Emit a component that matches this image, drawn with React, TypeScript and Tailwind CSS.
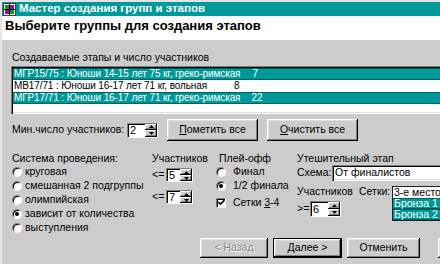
import React from "react";

const RAISED =
  "shadow-[inset_-1px_-1px_0_#000,inset_1px_1px_0_#fff,inset_-2px_-2px_0_#808080,inset_2px_2px_0_#dfdfdf]";
const RAISED_SMALL = "shadow-[inset_-1px_-1px_0_#000,inset_1px_1px_0_#fff,inset_-2px_-2px_0_#808080]";
const SUNKEN =
  "shadow-[inset_1px_1px_0_#808080,inset_2px_2px_0_#000,inset_-1px_-1px_0_#fff,inset_-2px_-2px_0_#dfdfdf]";

function AppIcon() {
  return (
    <svg width="13" height="13" viewBox="0 0 13 13" className="ml-[1px] shrink-0">
      <rect x="0.5" y="0.5" width="12" height="12" fill="#fff" stroke="#404040" />
      <rect x="2" y="2" width="4" height="4" fill="#00a000" />
      <rect x="7" y="2" width="4" height="4" fill="#a000a0" />
      <rect x="2" y="7" width="4" height="4" fill="#a000a0" />
      <rect x="7" y="7" width="4" height="4" fill="#00a000" />
      <path d="M6.5 1 V12 M1 6.5 H12" stroke="#000" strokeWidth="1" />
    </svg>
  );
}

function Arrow({ up }: { up?: boolean }) {
  return (
    <svg width="5" height="3" viewBox="0 0 5 3">
      {up ? <polygon points="2.5,0 5,3 0,3" fill="#000" /> : <polygon points="0,0 5,0 2.5,3" fill="#000" />}
    </svg>
  );
}

function Spin({ value, className }: { value: string; className: string }) {
  return (
    <div className={`flex shrink-0 border border-t-[#808080] border-l-[#808080] border-r-white border-b-white ${className}`}>
      <div className="flex-1 bg-white border-t border-l border-t-black border-l-black flex items-center pl-[1px] text-[11px] leading-none">
        {value}
      </div>
      <div className="w-[12px] flex flex-col">
        <div className={`flex-1 bg-[#cccccc] flex items-center justify-center ${RAISED_SMALL}`}>
          <Arrow up />
        </div>
        <div className={`flex-1 bg-[#cccccc] flex items-center justify-center ${RAISED_SMALL}`}>
          <Arrow />
        </div>
      </div>
    </div>
  );
}

function Radio({ checked }: { checked?: boolean }) {
  return (
    <span className="w-[10px] h-[10px] rounded-full bg-white border border-t-[#808080] border-l-[#808080] border-b-white border-r-white shadow-[inset_1px_1px_0_#000] shrink-0 flex items-center justify-center">
      {checked && <span className="w-[4px] h-[4px] rounded-full bg-black" />}
    </span>
  );
}

function Check() {
  return (
    <span className="w-[10px] h-[10px] bg-white border border-t-[#808080] border-l-[#808080] border-b-white border-r-white shadow-[inset_1px_1px_0_#000] shrink-0 flex items-center justify-center">
      <svg width="7" height="7" viewBox="0 0 7 7">
        <path d="M0.5 3 L2.5 5 L6.5 1" stroke="#000" strokeWidth="1.6" fill="none" />
      </svg>
    </span>
  );
}

function Btn({ children, className }: { children?: React.ReactNode; className: string }) {
  return (
    <div className={`bg-[#cccccc] flex items-center justify-center shrink-0 text-[10.5px] ${RAISED} ${className}`}>
      {children}
    </div>
  );
}

const rows = [
  { t: "МГР15/75 : Юноши 14-15 лет 75 кг, греко-римская", n: "7", sel: true, nc: "ml-[12px]" },
  { t: "МВ17/71 : Юноши 16-17 лет 71 кг, вольная", n: "8", sel: false, nc: "ml-[27px]" },
  { t: "МГР17/71 : Юноши 16-17 лет 71 кг, греко-римская", n: "22", sel: true, nc: "ml-[11px]" },
];

const systems = ["круговая", "смешанная 2 подгруппы", "олимпийская", "зависит от количества", "выступления"];

export default function App() {
  return (
    <div className="w-[440px] h-[264px] overflow-hidden bg-[#cccccc] font-['Liberation_Sans',Arial,sans-serif] text-[10.5px] text-black border-t-2 border-l-2 border-t-[#e4e4e4] border-l-[#e4e4e4] flex flex-col">
      <div className="h-[14px] bg-[#009999] flex items-center shrink-0">
        <AppIcon />
        <span className="ml-[3px] text-white font-bold text-[11.5px] leading-none">Мастер создания групп и этапов</span>
      </div>
      <div className="h-[24px] bg-white pl-[3px] pt-[2px] shrink-0">
        <span className="font-bold text-[13px] leading-[15px] block">Выберите группы для создания этапов</span>
      </div>
      <div className="flex flex-col pl-[10px] pt-[11px]">
        <div className="leading-[13px]">Создаваемые этапы и число участников</div>
        <div className={`mt-[2px] -ml-[1px] w-[440px] h-[48px] bg-white p-[2px] shrink-0 ${SUNKEN}`}>
          {rows.map((r) => (
            <div
              key={r.t}
              className={
                r.sel
                  ? "h-[12px] bg-[#009999] border-y border-[#006060] text-white flex items-center pl-[1px] text-[10px] tracking-[-0.1px] leading-none whitespace-nowrap"
                  : "h-[12px] bg-white text-black flex items-center pl-[1px] text-[10px] tracking-[-0.1px] leading-none whitespace-nowrap"
              }
            >
              <span>{r.t}</span>
              <span className={r.nc}>{r.n}</span>
            </div>
          ))}
        </div>
        <div className="mt-[5px] h-[22px] flex items-center">
          <span className="w-[115px] shrink-0">Мин.число участников:</span>
          <Spin value="2" className="w-[31px] h-[15px]" />
          <Btn className="ml-[9px] w-[91px] h-[22px]">
            <span>
              <span className="underline underline-offset-[1px]">П</span>ометить все
            </span>
          </Btn>
          <Btn className="ml-[9px] w-[91px] h-[22px]">
            <span>
              <span className="underline underline-offset-[1px]">О</span>чистить все
            </span>
          </Btn>
        </div>
        <div className="mt-[11px] flex">
          <div className="w-[140px] shrink-0 flex flex-col">
            <div className="leading-[13px]">Система проведения:</div>
            {systems.map((s, i) => (
              <div key={s} className="h-[14px] flex items-center">
                <Radio checked={i === 3} />
                <span className="ml-[3px]">{s}</span>
              </div>
            ))}
          </div>
          <div className="w-[67px] shrink-0 flex flex-col">
            <div className="leading-[13px]">Участников</div>
            <div className="mt-[3px] h-[14px] flex items-center">
              <span className="w-[14px] shrink-0">&lt;=</span>
              <Spin value="5" className="w-[27px] h-[14px]" />
            </div>
            <div className="mt-[8px] h-[14px] flex items-center">
              <span className="w-[14px] shrink-0">&lt;=</span>
              <Spin value="7" className="w-[27px] h-[14px]" />
            </div>
          </div>
          <div className="w-[78px] shrink-0 flex flex-col">
            <div className="leading-[13px]">Плей-офф</div>
            <div className="h-[14px] flex items-center -ml-[3px]">
              <Radio />
              <span className="ml-[7px]">Финал</span>
            </div>
            <div className="h-[14px] flex items-center -ml-[3px]">
              <Radio checked />
              <span className="ml-[7px]">1/2 финала</span>
            </div>
            <div className="mt-[2.5px] h-[14px] flex items-center -ml-[3px]">
              <Check />
              <span className="ml-[7px]">
                Сетки <span className="underline underline-offset-[1px]">3</span>-4
              </span>
            </div>
          </div>
          <div className="w-[170px] shrink-0 flex flex-col">
            <div className="leading-[13px]">Утешительный этап</div>
            <div className="h-[16px] flex items-center">
              <span className="w-[35px] shrink-0">Схема:</span>
              <div className={`w-[120px] h-[16px] bg-white flex items-center pl-[3px] shrink-0 ${SUNKEN}`}>
                От финалистов
              </div>
            </div>
            <div className="flex">
              <div className="w-[95px] shrink-0 flex flex-col">
                <div className="mt-[3.5px] leading-[13px] flex">
                  <span className="w-[62px] shrink-0">Участников</span>
                  <span>Сетки:</span>
                </div>
                <div className="mt-[3.5px] h-[16px] flex items-center">
                  <span className="w-[13px] shrink-0">&gt;=</span>
                  <Spin value="6" className="w-[31px] h-[16px]" />
                </div>
              </div>
              <div className="mt-[5px] w-[60px] h-[35px] shrink-0 bg-white border-t border-l border-b border-[#202020] flex flex-col">
                <div className="h-[11px] flex items-center pl-[1px] leading-none whitespace-nowrap">3-е место</div>
                <div className="h-[11px] bg-[#009999] border-y border-[#006060] text-white flex items-center pl-[1px] leading-none whitespace-nowrap">
                  Бронза 1
                </div>
                <div className="h-[11px] bg-[#009999] border-y border-[#006060] text-white flex items-center pl-[1px] leading-none whitespace-nowrap">
                  Бронза 2
                </div>
              </div>
            </div>
          </div>
        </div>
        <div className="mt-[3px] ml-[188px] flex">
          <Btn className="w-[68px] h-[20px]">
            <span className="text-[#8a8a8a] [text-shadow:1px_1px_0_#fff]">&lt; Назад</span>
          </Btn>
          <div className="ml-[5px] w-[69px] h-[20px] border border-black flex shrink-0">
            <Btn className="w-full h-full">Далее &gt;</Btn>
          </div>
          <Btn className="ml-[5px] w-[73px] h-[20px]">Отменить</Btn>
          <Btn className="ml-[18px] w-[73px] h-[20px]" />
        </div>
      </div>
    </div>
  );
}
